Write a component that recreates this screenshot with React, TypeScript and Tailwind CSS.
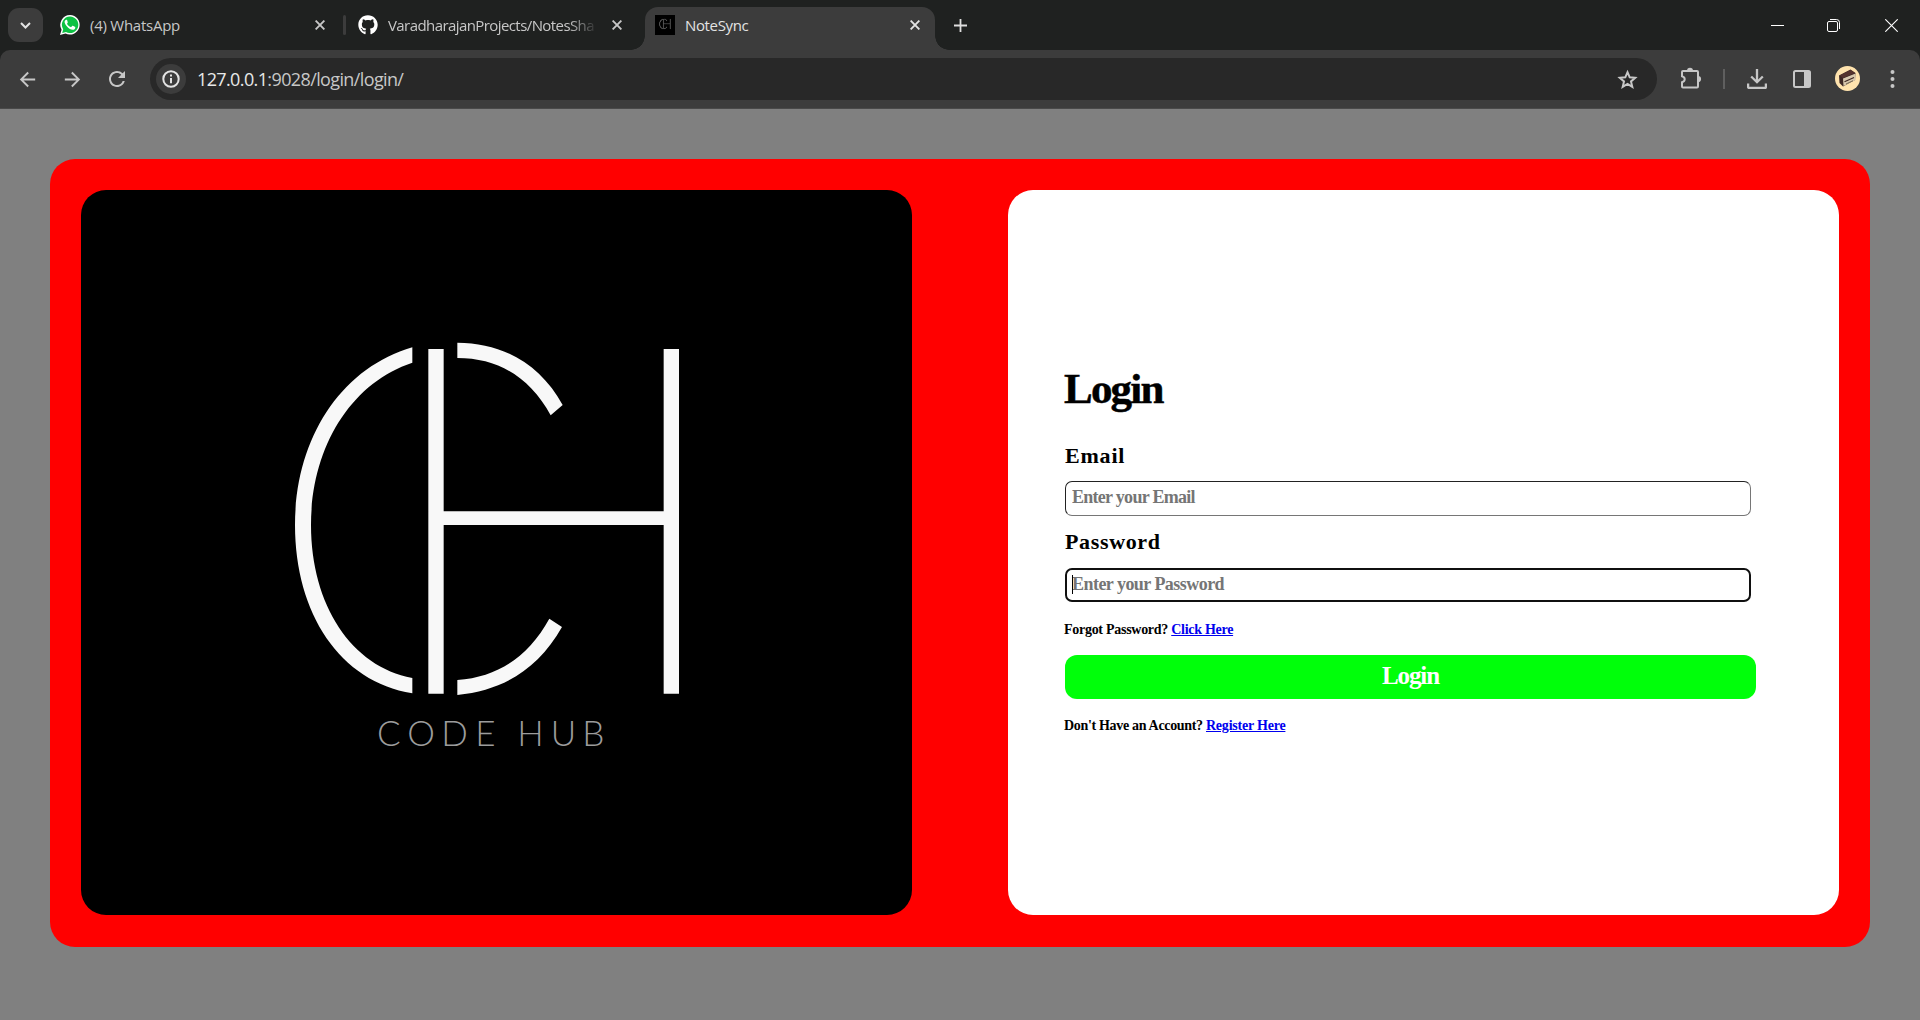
import React from "react";
import { MdArrowBack, MdArrowForward, MdRefresh } from "react-icons/md";
import { FaGithub } from "react-icons/fa";

function Close({ className = "" }: { className?: string }) {
  return (
    <svg className={"h-[10px] w-[10px] shrink-0 " + className} viewBox="0 0 10 10" fill="none" stroke="currentColor" strokeWidth="1.9">
      <path d="M.6.6 9.4 9.4M9.4.6.6 9.4" />
    </svg>
  );
}

function Monogram() {
  return (
    <>
      <path d="M427 82C210 145 75 360 75 615C75 880 210 1085 427 1120V1074C245 1040 123 855 123 615C123 385 240 190 427 128Z" />
      <path d="M562 68C700 68 812 135 878 255L842 286C780 172 685 114 562 114Z" />
      <path d="M562 1125C705 1110 805 1045 876 921L838 896C775 1010 685 1070 562 1080Z" />
      <path d="M475 87H521V574H1181V87H1227V1121H1181V615H521V1121H475Z" />
    </>
  );
}

function WhatsApp() {
  return (
    <svg className="h-5 w-5 shrink-0" viewBox="0 0 20 20">
      <path fill="#fff" d="M10.1 0a9.8 9.8 0 0 0-8.5 14.7L0 20l5.5-1.4A9.8 9.8 0 1 0 10.1 0Z" />
      <path fill="#0dc143" d="M10.1 1.6a8.2 8.2 0 0 0-6.9 12.6l-1 3.7 3.8-1A8.2 8.2 0 1 0 10.1 1.6Z" />
      <path fill="#fff" d="M7.2 5.3c-.3-.5-.5-.5-1-.5-.7 0-1.6.9-1.6 2.300 0 2.700 4.400 7.700 8 7.700 1.600 0 2.700-.9 2.700-2.400 0-.5-.1-.5-.5-.7l-1.900-.9c-.4-.2-.6-.1-.8.2l-.8 1c-.2.200-.4.200-.7.100-1.600-.7-2.700-1.700-3.500-3.100-.200-.4 0-.5.3-.8.300-.4.500-.6.300-1Z" />
    </svg>
  );
}

function TabStrip() {
  return (
    <div className="flex h-[50px] items-center bg-[#1f2120] text-[15px] text-[#c7c7c7]">
      <div className="ml-2 flex h-[34px] w-[35px] items-center justify-center rounded-[11px] bg-[#3c3c3c]">
        <svg className="h-[7px] w-[11px]" viewBox="0 0 11 7" fill="none" stroke="#e3e3e3" strokeWidth="2">
          <path d="M1 1l4.500 4.500L10 1" />
        </svg>
      </div>
      <div className="ml-[17px] flex h-full w-[265px] items-center">
        <WhatsApp />
        <span className="ml-[10px] flex-1 tracking-[-0.25px]">(4) WhatsApp</span>
        <Close />
      </div>
      <div className="ml-[18px] h-5 w-[3px] rounded-full bg-[#3c3c3c]" />
      <div className="ml-3 flex h-full w-[264px] items-center">
        <FaGithub className="h-5 w-5 shrink-0 text-white" />
        <span className="mr-[14px] ml-[10px] w-[210px] whitespace-nowrap tracking-[-0.58px] [mask-image:linear-gradient(to_right,black_86%,transparent_100%)]">
          VaradharajanProjects/NotesSha
        </span>
        <Close />
      </div>
      <div className="mt-[7px] ml-[23px] relative flex h-[43px] w-[290px] items-center rounded-t-[13px] bg-[#3c3c3c] pb-[7px] pl-[10px] text-[#e3e3e3]">
        <div className="absolute bottom-0 -left-[14px] h-[14px] w-[14px] bg-[radial-gradient(circle_at_0_0,transparent_13.5px,#3c3c3c_14px)]" />
        <div className="absolute bottom-0 -right-[14px] h-[14px] w-[14px] bg-[radial-gradient(circle_at_100%_0,transparent_13.5px,#3c3c3c_14px)]" />
        <svg className="h-5 w-5 shrink-0 bg-black" viewBox="-390 -340 2100 2100" fill="#888" stroke="#888" strokeWidth="15">
          <Monogram />
        </svg>
        <span className="ml-[10px] flex-1 tracking-[-0.35px]">NoteSync</span>
        <Close className="mr-[15px]" />
      </div>
      <svg className="ml-[19px] h-[13px] w-[13px]" viewBox="0 0 13 13" stroke="#dedede" strokeWidth="1.800">
        <path d="M6.500 0v13M0 6.500h13" />
      </svg>
      <div className="mr-[22px] ml-auto flex items-center text-white">
        <div className="h-px w-[13px] bg-white" />
        <svg className="ml-[43px] h-[13px] w-[13px]" viewBox="0 0 13 13" fill="none" stroke="currentColor">
          <rect x=".5" y="2.500" width="10" height="10" rx="1.500" />
          <path d="M3 .5h6.500a3 3 0 0 1 3 3V10" />
        </svg>
        <svg className="ml-[45px] h-[13px] w-[13px]" viewBox="0 0 13 13" fill="none" stroke="currentColor" strokeWidth="1.100">
          <path d="M.3.3l12.400 12.400M12.700.3.3 12.700" />
        </svg>
      </div>
    </div>
  );
}

function Toolbar() {
  return (
    <div className="bg-[#1f2120]">
      <div className="flex h-[59px] items-center rounded-t-[10px] border-b border-[#494949] bg-[#3c3c3c] text-[#c7c7c7]">
        <MdArrowBack className="ml-4 h-[23px] w-[23px]" />
        <MdArrowForward className="ml-[22px] h-[23px] w-[23px]" />
        <MdRefresh className="ml-[21px] h-[24px] w-[24px]" />
        <div className="ml-[21px] flex h-[42px] w-[1507px] items-center rounded-full bg-[#282828]">
          <div className="ml-[6px] flex h-[30px] w-[30px] items-center justify-center rounded-full bg-[#3c3c3c]">
            <svg className="h-[18px] w-[18px]" viewBox="0 0 18 18" fill="none" stroke="#e3e3e3" strokeWidth="2">
              <circle cx="9" cy="9" r="7.700" />
              <path d="M9 8v5.200M9 4.600v2" />
            </svg>
          </div>
          <div className="ml-[11px] flex-1 text-[18px] tracking-[-0.62px]">
            <span className="text-[#e8e8e8]">127.0.0.1</span>:9028/login/login/
          </div>
          <svg className="mr-[19px] h-[21px] w-[21px]" viewBox="0 0 21 21" fill="none" stroke="currentColor" strokeWidth="2">
            <path d="M10.500 3.200l2.200 5.100 5.500.5-4.200 3.600 1.300 5.400-4.800-2.900-4.800 2.900L7 12.400 2.800 8.800l5.500-.5Z" />
          </svg>
        </div>
        <svg className="mb-[2px] ml-[23px] h-[22px] w-[22px]" viewBox="0 0 22 22" fill="none" stroke="currentColor" strokeWidth="2">
          <path d="M3 4H17a1 1 0 0 1 1 1V19.500a1 1 0 0 1-1 1H3a1 1 0 0 1-1-1v-4.300c3.600-1.200 3.600-4.900 0-6V5a1 1 0 0 1 1-1Z" />
          <path fill="currentColor" stroke="none" d="M7 3.800a3 3 0 0 1 6 0ZM18 9a3.100 3.100 0 0 1 0 6.200Z" />
        </svg>
        <div className="ml-[21px] h-5 w-[2px] bg-[#5f5f5f]" />
        <svg className="ml-[22px] h-5 w-5" viewBox="0 0 20 20" fill="none" stroke="currentColor" strokeWidth="2.300">
          <path d="M10 0v13M4.200 7.500l5.800 5.700 5.800-5.700M1.100 14.500V18a1 1 0 0 0 1 1h15.800a1 1 0 0 0 1-1v-3.500" />
        </svg>
        <svg className="ml-[26px] h-[18px] w-[18px]" viewBox="0 0 18 18" fill="none" stroke="currentColor" strokeWidth="2">
          <rect x="1" y="1" width="16" height="16" rx="1.500" />
          <path d="M11 1h6v16h-6Z" fill="currentColor" stroke="none" />
        </svg>
        <svg className="mb-px ml-6 h-[25px] w-[25px]" viewBox="0 0 25 25">
          <circle cx="12.500" cy="12.500" r="12.500" fill="#ffe3ae" />
          <path d="M4 9.500 15.500 3.500 20.500 7 20 14 8 20.500 4.500 17Z" fill="#3d2724" />
          <path d="M8 12.500 20.500 7.500V14L8.500 20Z" fill="#d8c8ae" />
          <path d="M4.500 9.500 15.500 4 20 7 8 12Z" fill="#55332e" />
          <path d="M9.500 15.700 19 11.500" stroke="#3d2724" strokeWidth="1.200" />
          <path d="M11 18 18 14.700" stroke="#746550" strokeWidth="1" />
        </svg>
        <svg className="ml-[30px] h-[18px] w-[5px]" viewBox="0 0 5 18" fill="currentColor">
          <circle cx="2.500" cy="2" r="2" />
          <circle cx="2.500" cy="9" r="2" />
          <circle cx="2.500" cy="16" r="2" />
        </svg>
      </div>
    </div>
  );
}

function LogoPanel() {
  return (
    <div className="h-[725px] w-[831px] rounded-[25px] bg-black pt-[130px] pl-[189px]">
      <svg className="h-[440px] w-[440px]" viewBox="0 0 1320 1320" fill="#f8f8f8">
        <Monogram />
        <text x="321 412 514 616 742 842 937" y="1279" fontSize="105" fontWeight="300" fill="#9c9c9c" className="font-['Lato',sans-serif]">CODEHUB</text>
      </svg>
    </div>
  );
}

function LoginPanel() {
  return (
    <form className="flex h-[725px] w-[831px] flex-col rounded-[25px] bg-white pt-[174px] pl-[57px] font-['Liberation_Serif',serif] font-bold text-black">
      <h1 className="-ml-px h-[50px] text-[43px] leading-[49px] tracking-[-1.8px] [-webkit-text-stroke:0.5px_black]">Login</h1>
      <label className="mt-[29px] h-[26px] text-[22px] leading-[25px] tracking-[0.8px]">Email</label>
      <input
        className="mt-[12px] h-[35px] w-[686px] rounded-[7px] border border-t-[#222] border-l-[#222] border-r-[#767676] border-b-[#767676] px-[6px] pb-[3px] text-[18px] tracking-[-0.72px] placeholder:text-[#757575]"
        placeholder="Enter your Email"
      />
      <label className="mt-[13px] h-[26px] text-[22px] leading-[25px] tracking-[0.65px]">Password</label>
      <div className="relative mt-[13px] h-[34px] w-[686px]">
        <input
          className="h-full w-full rounded-[7px] border-2 border-[#101010] px-[5px] pb-[2px] text-[18px] tracking-[-0.54px] placeholder:text-[#757575]"
          placeholder="Enter your Password"
        />
        <span className="absolute top-[7px] left-[7px] h-[19px] w-px bg-black" />
      </div>
      <p className="-ml-px mt-[19px] h-[18px] text-[14px] leading-[18px] tracking-[-0.28px]">
        Forgot Password? <a className="text-[#0000ee] underline">Click Here</a>
      </p>
      <button type="button" className="mt-[16px] h-[44px] w-[691px] rounded-[12px] bg-[#00ff0a] pb-[2px] text-[25px] tracking-[-1.1px] text-white">Login</button>
      <p className="-ml-px mt-[18px] h-[18px] text-[14px] leading-[18px] tracking-[-0.32px]">
        Don't Have an Account? <a className="tracking-[-0.22px] text-[#0000ee] underline">Register Here</a>
      </p>
    </form>
  );
}

export default function App() {
  return (
    <div className="flex h-[1020px] w-[1920px] flex-col overflow-hidden bg-[#808080] font-['Open_Sans',sans-serif]">
      <TabStrip />
      <Toolbar />
      <main className="mx-[50px] mt-[50px] flex h-[788px] justify-between rounded-[25px] bg-[#ff0000] p-[31px]">
        <LogoPanel />
        <LoginPanel />
      </main>
    </div>
  );
}
